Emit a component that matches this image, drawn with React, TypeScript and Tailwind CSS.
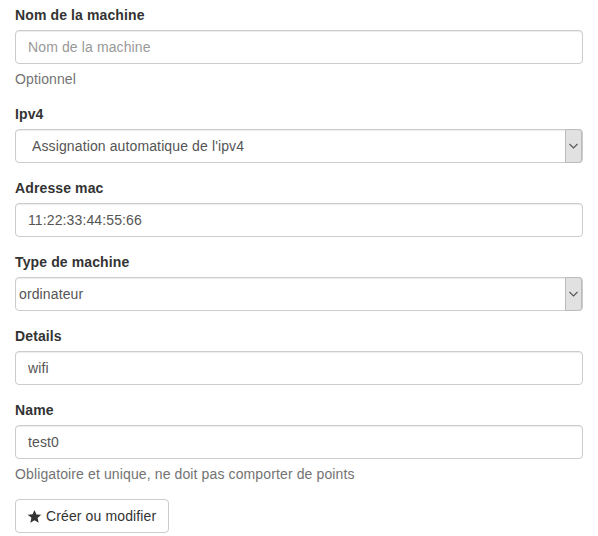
import React from "react"

const font = { fontFamily: '"Liberation Sans", Arial, sans-serif' }

function Label({ children }: { children: React.ReactNode }) {
  return <label className="mb-[5px] block text-[14px] font-bold leading-5 text-[#333]">{children}</label>
}

function TextInput({ value, placeholder }: { value?: string; placeholder?: string }) {
  return (
    <input
      readOnly
      value={value}
      placeholder={placeholder}
      className="block h-[34px] w-full rounded-[4px] border border-[#ccc] bg-white px-3 py-[6px] text-[14px] leading-5 tracking-[0.12px] text-[#555] shadow-[inset_0_1px_1px_rgba(0,0,0,0.075)] outline-none placeholder:text-[#999]"
    />
  )
}

function FakeSelect({ value, indent }: { value: string; indent: string }) {
  return (
    <div className="flex h-[34px] w-full items-stretch rounded-[4px] border border-[#ccc] bg-white shadow-[inset_0_1px_1px_rgba(0,0,0,0.075)]">
      <div className={`flex flex-1 items-center text-[14px] text-[#555] ${indent}`}>{value}</div>
      <div className="my-[-1px] flex w-[17px] items-center justify-center rounded-r-[3px] border border-[#bbb] bg-[#e1e1e1]">
        <svg width="9" height="6" viewBox="0 0 9 6" fill="none">
          <path d="M0.5 1 L4.5 5 L8.5 1" stroke="#555" strokeWidth="1.1" />
        </svg>
      </div>
    </div>
  )
}

function Help({ children }: { children: React.ReactNode }) {
  return <p className="mt-[5px] text-[14px] leading-5 text-[#737373]">{children}</p>
}

export default function App() {
  return (
    <div className="min-h-screen bg-white px-[15px] pt-[5px] tracking-[0.12px]" style={font}>
      <div className="flex flex-col gap-[15px]">
        <div>
          <Label>Nom de la machine</Label>
          <TextInput placeholder="Nom de la machine" />
          <Help>Optionnel</Help>
        </div>
        <div>
          <Label>Ipv4</Label>
          <FakeSelect value="Assignation automatique de l'ipv4" indent="pl-4" />
        </div>
        <div>
          <Label>Adresse mac</Label>
          <TextInput value="11:22:33:44:55:66" />
        </div>
        <div>
          <Label>Type de machine</Label>
          <FakeSelect value="ordinateur" indent="pl-[3px]" />
        </div>
        <div>
          <Label>Details</Label>
          <TextInput value="wifi" />
        </div>
        <div>
          <Label>Name</Label>
          <TextInput value="test0" />
          <Help>Obligatoire et unique, ne doit pas comporter de points</Help>
        </div>
        <div>
          <button className="flex h-[34px] items-center gap-[4px] rounded-[4px] border border-[#ccc] bg-white pl-[11px] pr-3 text-[14px] text-[#333]">
            <svg width="15" height="15" viewBox="0 0 24 24" fill="#333">
              <path d="M12 1.5l3.1 7.1 7.7.6-5.9 5 1.8 7.6L12 17.8l-6.7 4 1.8-7.6-5.9-5 7.7-.6z" />
            </svg>
            Créer ou modifier
          </button>
        </div>
      </div>
    </div>
  )
}
